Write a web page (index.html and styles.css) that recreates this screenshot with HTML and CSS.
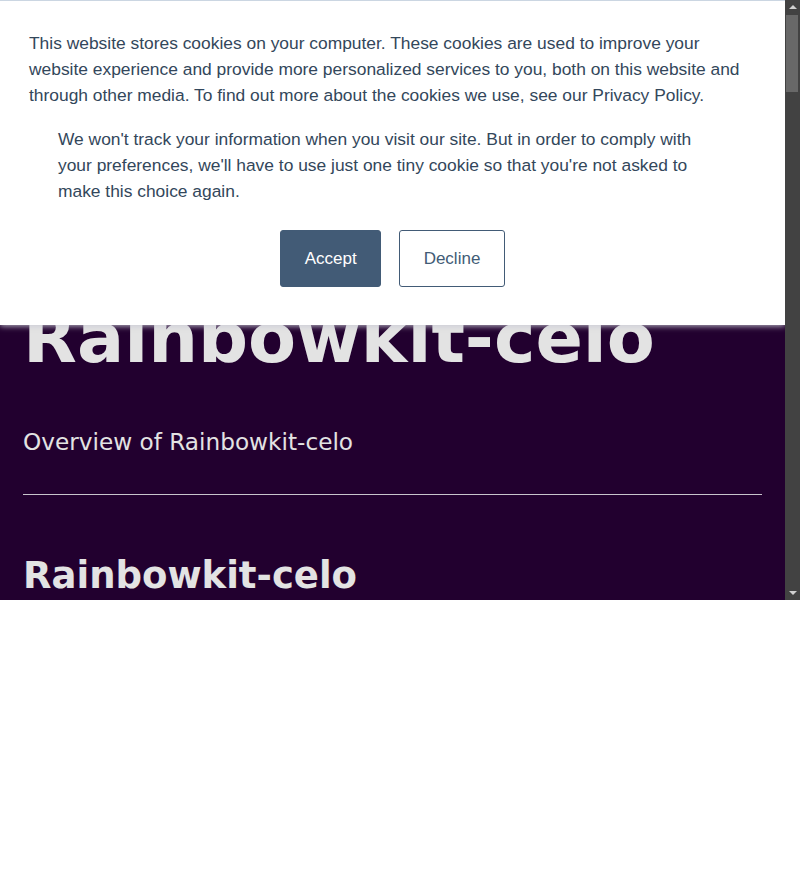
FILE: index.html
```html
<!DOCTYPE html>
<html lang="en">
<head>
<meta charset="utf-8">
<title>Rainbowkit-celo</title>
<link rel="stylesheet" href="styles.css">
</head>
<body>
<div class="frame">
  <div class="viewport">
    <main class="doc">
      <h1 class="doc-title">Rainbowkit-celo</h1>
      <p class="doc-lead">Overview of Rainbowkit-celo</p>
      <hr class="doc-rule">
      <h2 class="doc-h2">Rainbowkit-celo</h2>
    </main>
    <div class="cookie-banner">
      <p class="cookie-text">This website stores cookies on your computer. These cookies are used to improve your website experience and provide more personalized services to you, both on this website and through other media. To find out more about the cookies we use, see our Privacy Policy.</p>
      <p class="cookie-text cookie-text-narrow">We won't track your information when you visit our site. But in order to comply with your preferences, we'll have to use just one tiny cookie so that you're not asked to make this choice again.</p>
      <div class="cookie-actions">
        <button class="btn btn-accept">Accept</button>
        <button class="btn btn-decline">Decline</button>
      </div>
    </div>
  </div>
  <div class="scrollbar" aria-hidden="true">
    <div class="sb-arrow sb-up"></div>
    <div class="sb-track"><div class="sb-thumb"></div></div>
    <div class="sb-arrow sb-down"></div>
  </div>
</div>
</body>
</html>
```

FILE: styles.css
```css
html, body {
  margin: 0;
  padding: 0;
  background: #ffffff;
}

.frame {
  display: flex;
  width: 800px;
  height: 600px;
  overflow: hidden;
}

.viewport {
  position: relative;
  width: 785px;
  height: 600px;
  overflow: hidden;
  background: #22002f;
}

.doc {
  padding: 278px 23px 0;
  font-family: "DejaVu Sans", sans-serif;
  color: #e3e3e3;
}

.doc-title {
  margin: 0;
  font-size: 70px;
  line-height: 120px;
  font-weight: bold;
}

.doc-lead {
  margin: 28px 0 0;
  font-size: 23.2px;
  line-height: 32px;
  font-weight: normal;
}

.doc-rule {
  margin: 36px 0 0;
  border: 0;
  border-top: 1px solid #c8c4cc;
  height: 0;
}

.doc-h2 {
  margin: 51px 0 0;
  font-size: 37px;
  line-height: 60px;
  font-weight: bold;
}

.cookie-banner {
  position: absolute;
  top: 0;
  left: 0;
  right: 0;
  box-sizing: border-box;
  height: 325px;
  padding: 29px 29px 0;
  background: #ffffff;
  border-top: 1px solid #cbd6e2;
  box-shadow: 0 1px 6px rgba(200, 200, 212, 0.95);
  font-family: "Liberation Sans", Arial, sans-serif;
  font-size: 17.4px;
  line-height: 26px;
  color: #33475b;
}

.cookie-text {
  margin: 0;
}

.cookie-text-narrow {
  margin: 18px 29px 0;
}

.cookie-actions {
  display: flex;
  justify-content: center;
  gap: 18px;
  margin-top: 26px;
}

.btn {
  box-sizing: border-box;
  height: 57px;
  padding: 0 23.5px;
  border-radius: 3px;
  font-family: "Liberation Sans", Arial, sans-serif;
  font-size: 17px;
  line-height: 1;
  cursor: pointer;
}

.btn-accept {
  background: #425b76;
  border: 1px solid #425b76;
  color: #ffffff;
}

.btn-decline {
  background: #ffffff;
  border: 1px solid #425b76;
  color: #425b76;
}

.scrollbar {
  display: flex;
  flex-direction: column;
  width: 15px;
  height: 600px;
  background: #424242;
}

.sb-arrow {
  height: 14px;
  display: flex;
  justify-content: center;
  align-items: center;
}

.sb-up::before,
.sb-down::before {
  content: "";
  width: 0;
  height: 0;
  border-left: 4px solid transparent;
  border-right: 4px solid transparent;
}

.sb-up::before {
  border-bottom: 4px solid #d0d0d0;
}

.sb-down::before {
  border-top: 4px solid #d0d0d0;
}

.sb-track {
  flex: 1;
  padding: 1px 2px 0 1px;
}

.sb-thumb {
  height: 77px;
  background: #686868;
}
```
